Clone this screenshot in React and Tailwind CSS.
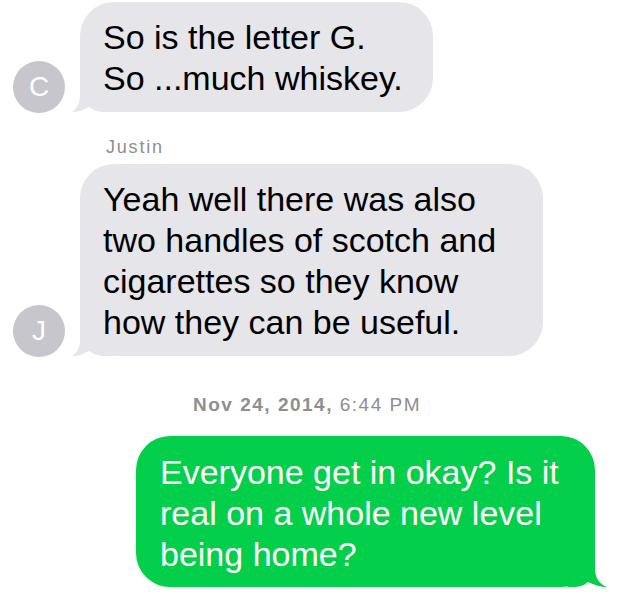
import React from "react";

const GrayTail = () => (
  <svg
    className="absolute left-[-8px] bottom-0"
    width="40"
    height="40"
    viewBox="0 0 40 40"
  >
    <path
      d="M40 0 L8 0 L8 24 C8 31 5 37 0 40 C6 40 12 38 17 35 C21 38 27 40 34 40 L40 40 Z"
      fill="#e5e5ea"
    />
  </svg>
);

const GreenTail = () => (
  <svg
    className="absolute right-[-13px] bottom-0"
    width="40"
    height="40"
    viewBox="0 0 40 40"
  >
    <path
      d="M0 0 L27 0 L27 22 C27 30 31 37 39 40 C33 40 26 38 20 35 C17 38 12 40 4 40 L0 40 Z"
      fill="#04cf4b"
    />
  </svg>
);

const Avatar = ({ letter }) => (
  <div className="ml-[13px] mr-[15px] mb-[-1px] w-[52px] h-[52px] shrink-0 rounded-full bg-[#c6c6cc] flex items-center justify-center text-white text-[28px] leading-none">
    {letter}
  </div>
);

const Incoming = ({ letter, width, lines }) => (
  <div className="flex items-end">
    <Avatar letter={letter} />
    <div
      className={`relative rounded-[34px] bg-[#e5e5ea] pl-[23px] pt-[15px] pb-[13px] ${width}`}
    >
      <GrayTail />
      <div className="relative text-[34px] leading-[41px] text-black whitespace-nowrap">
        {lines.map((l, i) => (
          <div key={i}>{l}</div>
        ))}
      </div>
    </div>
  </div>
);

export default function App() {
  return (
    <div
      className="w-[622px] h-[606px] bg-white overflow-hidden pt-[2px]"
      style={{ fontFamily: '"Liberation Sans", Arial, sans-serif' }}
    >
      <Incoming
        letter="C"
        width="w-[353px]"
        lines={["So is the letter G.", "So ...much whiskey."]}
      />

      <div className="mt-[24px] ml-[106px] text-[18px] leading-[22px] tracking-[1.8px] text-[#8e8e93]">
        Justin
      </div>

      <div className="mt-[6px]">
        <Incoming
          letter="J"
          width="w-[463px]"
          lines={[
            "Yeah well there was also",
            "two handles of scotch and",
            "cigarettes so they know",
            "how they can be useful.",
          ]}
        />
      </div>

      <div className="mt-[37px] text-center text-[19px] leading-[23px] tracking-[1.5px] text-[#8e8e93] pr-[8px]">
        <span className="font-bold">Nov 24, 2014,</span> 6:44 PM
      </div>

      <div className="mt-[20px] flex justify-end pr-[27px]">
        <div className="relative w-[459px] rounded-[34px] bg-[#04cf4b] pl-[24px] pt-[16px] pb-[12px]">
          <GreenTail />
          <div className="relative text-[34px] leading-[41px] text-white whitespace-nowrap">
            <div>Everyone get in okay? Is it</div>
            <div>real on a whole new level</div>
            <div>being home?</div>
          </div>
        </div>
      </div>
    </div>
  );
}
